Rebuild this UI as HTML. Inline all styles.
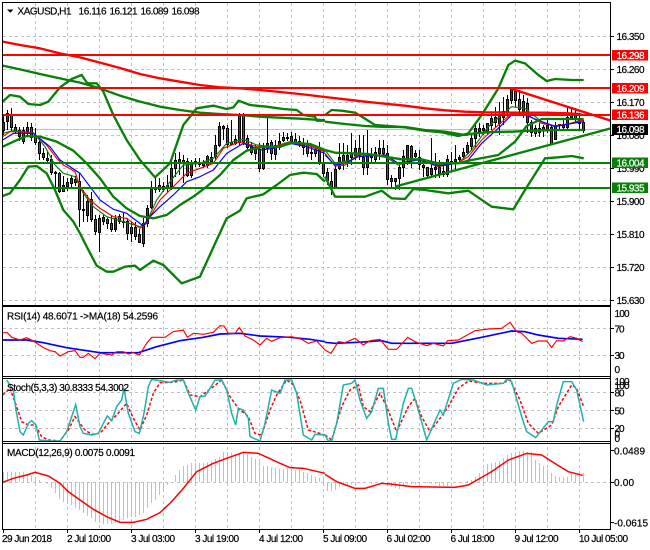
<!DOCTYPE html>
<html><head><meta charset="utf-8"><title>XAGUSD,H1</title>
<style>
html,body{margin:0;padding:0;background:#fff;width:650px;height:550px;overflow:hidden}
svg{display:block}
text{font-family:"Liberation Sans",sans-serif;font-size:10px;fill:#000;stroke:#000;stroke-width:.2}
.w{fill:#fff;stroke:#fff}
.thin{fill:none;stroke-width:3.5;stroke-linejoin:round}
.bb{fill:none;stroke-width:7;stroke-linejoin:round;stroke:#088008}
</style></head><body>
<svg width="650" height="550" viewBox="0 0 650 550" xmlns="http://www.w3.org/2000/svg">
<rect width="650" height="550" fill="#fff"/>
<!-- grid -->
<g stroke="#c0c0c0" stroke-width="1" stroke-dasharray="3 3" fill="none" shape-rendering="crispEdges">
<path d="M35.5 3V529M67.5 3V529M99.5 3V529M131.5 3V529M163.5 3V529M195.5 3V529M227.5 3V529M259.5 3V529M291.5 3V529M323.5 3V529M355.5 3V529M387.5 3V529M419.5 3V529M451.5 3V529M483.5 3V529M515.5 3V529M547.5 3V529M579.5 3V529"/>
<path d="M3 36.5H610M3 69.5H610M3 102.5H610M3 135.5H610M3 168.5H610M3 201.5H610M3 234.5H610M3 267.5H610M3 300.5H610M3 328.5H610M3 355.5H610M3 392.5H610M3 410.5H610M3 428.5H610M3 482.5H610"/>
</g>
<path d="M3 129.5H610" stroke="#c0c0c0" shape-rendering="crispEdges"/>
<!-- MACD histogram -->
<path stroke="#c0c0c0" stroke-width="1" shape-rendering="crispEdges" fill="none" d="M3.5 482V472M7.5 482V472M11.5 482V472M15.5 482V472M19.5 482V472M23.5 482V472M27.5 482V474M31.5 482V476M35.5 482V477M39.5 482V480M47.5 482V484M51.5 482V488M55.5 482V493M59.5 482V499M63.5 482V502M67.5 482V503M71.5 482V505M75.5 482V508M79.5 482V510M83.5 482V513M87.5 482V516M91.5 482V518M95.5 482V522M99.5 482V523M103.5 482V524M107.5 482V524M111.5 482V524M115.5 482V523M119.5 482V522M123.5 482V520M127.5 482V518M131.5 482V517M135.5 482V517M139.5 482V515M143.5 482V513M147.5 482V508M151.5 482V503M155.5 482V500M159.5 482V495M163.5 482V490M167.5 482V485M175.5 482V475M179.5 482V470M183.5 482V466M187.5 482V465M191.5 482V463M195.5 482V463M199.5 482V463M203.5 482V463M207.5 482V462M211.5 482V461M215.5 482V459M219.5 482V457M223.5 482V452M227.5 482V452M231.5 482V453M235.5 482V454M239.5 482V453M243.5 482V453M247.5 482V454M251.5 482V457M255.5 482V459M259.5 482V461M263.5 482V466M267.5 482V466M271.5 482V468M275.5 482V468M279.5 482V469M283.5 482V469M287.5 482V468M291.5 482V469M295.5 482V470M299.5 482V470M303.5 482V472M307.5 482V473M311.5 482V475M315.5 482V477M319.5 482V478M323.5 482V478M327.5 482V491M331.5 482V491M335.5 482V490M339.5 482V487M343.5 482V485M347.5 482V485M351.5 482V484M355.5 482V484M359.5 482V483M371.5 482V484M383.5 482V484M391.5 482V487M395.5 482V488M399.5 482V489M403.5 482V486M407.5 482V484M411.5 482V484M415.5 482V484M419.5 482V484M427.5 482V483M431.5 482V484M435.5 482V484M439.5 482V486M443.5 482V486M447.5 482V486M467.5 482V481M471.5 482V480M475.5 482V477M479.5 482V473M483.5 482V469M487.5 482V464M491.5 482V463M495.5 482V462M499.5 482V461M503.5 482V458M507.5 482V455M511.5 482V453M515.5 482V452M519.5 482V451M523.5 482V451M527.5 482V452M531.5 482V452M535.5 482V460M539.5 482V463M543.5 482V466M547.5 482V469M551.5 482V473M555.5 482V476M559.5 482V477M563.5 482V477M567.5 482V477M571.5 482V474M575.5 482V473M579.5 482V472M583.5 482V473"/>
<!-- wicks -->
<path stroke="#000" stroke-width="1" fill="none" shape-rendering="crispEdges" d="M3.5 115V135M7.5 110V130M11.5 108V132M15.5 124V134M19.5 127V141M23.5 127V144M27.5 122V135M31.5 123V141M35.5 128V145M39.5 138V160M43.5 148V160M47.5 152V163M51.5 155V175M55.5 171V188M59.5 172V193M63.5 176V192M67.5 178V191M71.5 175V188M75.5 176V186M79.5 173V227M83.5 190V222M87.5 195V222M91.5 192V222M95.5 215V235M99.5 215V252M103.5 215V225M107.5 217V229M111.5 215V232M115.5 215V232M119.5 214V224M123.5 213V228M127.5 218V240M131.5 222V242M135.5 222V240M139.5 229V243M143.5 218V247M147.5 205V227M151.5 181V209M155.5 178V193M159.5 178V192M163.5 182V192M167.5 175V192M171.5 160V190M175.5 153V177M179.5 152V175M183.5 155V183M187.5 158V177M191.5 160V178M195.5 158V167M199.5 158V167M203.5 160V168M207.5 155V168M211.5 152V163M215.5 135V160M219.5 122V147M223.5 125V140M227.5 125V148M231.5 120V145M235.5 135V145M239.5 113V145M243.5 113V145M247.5 135V150M251.5 142V155M255.5 145V160M259.5 143V172M263.5 143V170M267.5 115V153M271.5 140V160M275.5 140V160M279.5 133V150M283.5 132V142M287.5 133V141M291.5 132V143M295.5 133V145M299.5 136V147M303.5 138V155M307.5 140V157M311.5 145V160M315.5 145V157M319.5 142V165M323.5 150V177M327.5 168V185M331.5 172V195M335.5 165V188M339.5 143V170M343.5 143V170M347.5 145V167M351.5 133V165M355.5 140V160M359.5 135V160M363.5 135V175M367.5 130V175M371.5 148V162M375.5 147V163M379.5 140V160M383.5 140V157M387.5 145V185M391.5 175V187M395.5 178V190M399.5 165V190M403.5 150V177M407.5 145V165M411.5 145V168M415.5 150V158M419.5 150V170M423.5 162V177M427.5 167V178M431.5 138V178M435.5 153V178M439.5 160V178M443.5 165V177M447.5 155V177M451.5 152V172M455.5 145V170M459.5 155V163M463.5 148V158M467.5 142V155M471.5 135V150M475.5 125V148M479.5 123V137M483.5 125V135M487.5 123V135M491.5 113V130M495.5 107V128M499.5 102V135M503.5 97V125M507.5 95V117M511.5 88V104M515.5 88V107M519.5 90V115M523.5 95V118M527.5 98V133M531.5 120V137M535.5 125V137M539.5 123V137M543.5 125V137M547.5 120V133M551.5 125V145M555.5 122V140M559.5 124V130M563.5 120V130M567.5 108V130M571.5 108V120M575.5 108V122M579.5 115V130M583.5 120V133"/>
<!-- green bodies -->
<path fill="#0a6a0a" stroke="#000" stroke-width="1" shape-rendering="crispEdges" d="M2.5 122.5h2v8h-2zM6.5 113.5h2v8h-2zM22.5 130.5h2v11h-2zM26.5 127.5h2v4h-2zM46.5 158.5h2v2h-2zM54.5 172.5h2v1h-2zM62.5 185.5h2v6h-2zM66.5 182.5h2v4h-2zM70.5 178.5h2v5h-2zM74.5 179.5h2v3h-2zM82.5 209.5h2v1h-2zM86.5 201.5h2v14h-2zM98.5 218.5h2v14h-2zM102.5 217.5h2v4h-2zM114.5 218.5h2v11h-2zM122.5 221.5h2v1h-2zM130.5 227.5h2v6h-2zM138.5 234.5h2v8h-2zM142.5 223.5h2v20h-2zM146.5 208.5h2v15h-2zM150.5 189.5h2v18h-2zM154.5 187.5h2v2h-2zM162.5 186.5h2v3h-2zM166.5 185.5h2v3h-2zM170.5 168.5h2v18h-2zM174.5 160.5h2v8h-2zM178.5 159.5h2v4h-2zM182.5 160.5h2v3h-2zM190.5 163.5h2v12h-2zM194.5 161.5h2v2h-2zM198.5 162.5h2v2h-2zM206.5 156.5h2v9h-2zM210.5 157.5h2v4h-2zM214.5 145.5h2v11h-2zM218.5 126.5h2v19h-2zM222.5 126.5h2v2h-2zM230.5 142.5h2v2h-2zM234.5 139.5h2v4h-2zM238.5 115.5h2v27h-2zM250.5 145.5h2v7h-2zM254.5 148.5h2v5h-2zM262.5 147.5h2v21h-2zM266.5 143.5h2v5h-2zM274.5 145.5h2v9h-2zM278.5 141.5h2v6h-2zM282.5 137.5h2v3h-2zM286.5 137.5h2v1h-2zM290.5 136.5h2v5h-2zM298.5 141.5h2v3h-2zM310.5 152.5h2v1h-2zM314.5 149.5h2v4h-2zM334.5 169.5h2v18h-2zM338.5 157.5h2v11h-2zM346.5 155.5h2v7h-2zM350.5 153.5h2v4h-2zM354.5 148.5h2v7h-2zM366.5 154.5h2v13h-2zM370.5 154.5h2v3h-2zM374.5 152.5h2v7h-2zM378.5 148.5h2v5h-2zM390.5 178.5h2v3h-2zM394.5 178.5h2v3h-2zM398.5 167.5h2v11h-2zM402.5 156.5h2v11h-2zM406.5 145.5h2v13h-2zM414.5 153.5h2v3h-2zM430.5 168.5h2v6h-2zM434.5 167.5h2v2h-2zM446.5 159.5h2v15h-2zM450.5 161.5h2v2h-2zM454.5 159.5h2v2h-2zM458.5 157.5h2v2h-2zM462.5 152.5h2v4h-2zM466.5 145.5h2v7h-2zM470.5 138.5h2v8h-2zM474.5 128.5h2v10h-2zM478.5 128.5h2v3h-2zM486.5 123.5h2v8h-2zM490.5 118.5h2v7h-2zM494.5 117.5h2v5h-2zM498.5 115.5h2v8h-2zM502.5 111.5h2v6h-2zM506.5 99.5h2v13h-2zM510.5 89.5h2v11h-2zM522.5 101.5h2v11h-2zM534.5 128.5h2v5h-2zM542.5 127.5h2v3h-2zM546.5 125.5h2v4h-2zM554.5 125.5h2v14h-2zM558.5 124.5h2v1h-2zM562.5 125.5h2v2h-2zM566.5 117.5h2v10h-2zM570.5 113.5h2v4h-2z"/>
<!-- red bodies -->
<path fill="#e81010" stroke="#000" stroke-width="1" shape-rendering="crispEdges" d="M10.5 114.5h2v13h-2zM14.5 127.5h2v4h-2zM18.5 130.5h2v6h-2zM30.5 127.5h2v10h-2zM34.5 135.5h2v7h-2zM38.5 142.5h2v11h-2zM42.5 153.5h2v4h-2zM50.5 159.5h2v13h-2zM58.5 173.5h2v18h-2zM78.5 181.5h2v28h-2zM90.5 199.5h2v20h-2zM94.5 219.5h2v12h-2zM106.5 219.5h2v4h-2zM110.5 223.5h2v6h-2zM118.5 216.5h2v5h-2zM126.5 221.5h2v12h-2zM134.5 227.5h2v9h-2zM158.5 185.5h2v4h-2zM186.5 161.5h2v14h-2zM202.5 163.5h2v2h-2zM226.5 128.5h2v16h-2zM242.5 115.5h2v27h-2zM246.5 138.5h2v9h-2zM258.5 149.5h2v19h-2zM270.5 142.5h2v11h-2zM294.5 139.5h2v4h-2zM302.5 143.5h2v4h-2zM306.5 143.5h2v10h-2zM318.5 149.5h2v13h-2zM322.5 162.5h2v11h-2zM326.5 172.5h2v8h-2zM330.5 181.5h2v6h-2zM342.5 155.5h2v8h-2zM358.5 148.5h2v7h-2zM362.5 157.5h2v10h-2zM382.5 148.5h2v5h-2zM386.5 153.5h2v26h-2zM410.5 146.5h2v13h-2zM418.5 157.5h2v7h-2zM422.5 165.5h2v2h-2zM426.5 167.5h2v8h-2zM438.5 167.5h2v6h-2zM442.5 171.5h2v3h-2zM482.5 128.5h2v2h-2zM514.5 91.5h2v9h-2zM518.5 99.5h2v10h-2zM526.5 103.5h2v19h-2zM530.5 122.5h2v10h-2zM538.5 128.5h2v4h-2zM550.5 127.5h2v17h-2zM574.5 114.5h2v5h-2zM578.5 118.5h2v5h-2zM582.5 122.5h2v8h-2z"/>
<!-- main lines left half -->
<g transform="scale(.33333)">
<polyline class="thin" stroke="#0a7d0a" points="8,400 40,392 100,398 135,440 165,495 190,520 225,530 250,580 280,620 320,650 370,665 420,680 440,665 470,600 510,545 550,495 600,490 640,475 680,430 730,418 770,435 820,440 870,425 920,433 975,450"/>
<polyline class="thin" stroke="#ff0000" points="8,410 30,395 60,395 100,400 140,435 170,475 190,495 225,515 240,560 270,600 300,625 340,650 380,655 420,685 440,670 450,650 480,600 520,560 560,520 600,505 640,490 670,445 720,425 770,440 820,440 870,428 920,435 975,455"/>
<polyline class="thin" stroke="#0000ff" points="8,420 40,400 100,400 150,440 180,480 240,520 300,600 340,628 380,640 430,678 450,650 480,620 520,585 560,545 600,530 640,510 680,460 730,430 780,450 820,445 870,430 920,440 975,460"/>
<polyline class="bb" points="8,197 60,208 120,222 180,235 240,248 300,265 360,287 420,305 480,320 540,330 600,338 660,342 720,345 780,350 840,353 900,356 975,361"/>
<polyline class="bb" points="8,440 40,425 80,408 120,410 170,425 220,452 260,490 300,535 340,590 380,625 420,648 460,655 500,645 540,615 580,590 620,560 660,525 700,480 740,452 790,440 840,440 880,428 930,432 975,450"/>
<polyline class="bb" points="8,305 30,285 60,290 85,312 120,315 145,305 180,262 215,237 245,225 262,250 290,250 310,275 340,345 380,420 420,480 465,532 510,490 550,375 590,325 640,317 680,327 700,322 716,302 750,315 800,320 850,327 890,330 910,345 945,350 950,362 975,362"/>
<polyline class="bb" points="8,588 30,580 60,540 85,500 110,498 140,520 165,570 190,630 220,665 240,700 260,740 290,797 320,815 340,815 375,800 405,797 420,810 460,782 490,795 545,850 600,830 650,720 680,655 720,632 740,595 790,583 830,555 870,525 910,518 950,522 975,545"/>
<polyline fill="none" stroke="#ff0000" stroke-width="7" stroke-linejoin="round" points="8,125 60,135 120,145 180,160 240,172 300,188 360,204 420,222 480,235 540,245 600,255 660,262 720,265 780,270 840,276 900,282 975,291"/>
</g>
<!-- main lines right half -->
<g transform="translate(325 0) scale(.33333)">
<polyline class="thin" stroke="#0a7d0a" points="0,450 30,490 80,480 100,460 180,470 220,495 280,475 340,495 400,490 440,450 490,380 530,345 560,320 600,325 650,365 690,378 730,372 776,358"/>
<polyline class="thin" stroke="#ff0000" points="0,460 30,498 60,495 100,465 180,465 220,490 280,478 340,500 400,488 430,470 470,420 520,375 560,340 600,340 650,370 690,378 730,372 776,360"/>
<polyline class="thin" stroke="#0000ff" points="0,465 30,495 60,490 100,470 180,465 220,490 280,480 340,498 400,490 430,480 470,430 520,385 560,345 600,345 650,365 690,380 730,372 776,365"/>
<polyline class="bb" points="0,365 60,372 120,378 180,381 240,381 300,390 360,395 420,405 450,400 500,396 560,395 620,392 700,390 776,390"/>
<polyline class="bb" points="0,450 30,458 80,460 130,462 180,470 230,478 290,478 340,490 400,490 440,480 520,465 570,425 605,378 650,357 776,357"/>
<polyline class="bb" points="0,345 20,330 50,332 90,338 110,350 150,375 240,382 300,392 350,397 400,408 430,400 470,345 520,265 550,195 570,182 600,190 640,225 665,243 690,237 740,240 776,240"/>
<polyline class="bb" points="0,530 15,560 30,590 120,590 170,572 200,595 240,597 265,567 300,570 370,580 430,572 500,620 565,628 600,570 660,475 700,472 740,468 776,475"/>
<polyline fill="none" stroke="#ff0000" stroke-width="7" stroke-linejoin="round" points="0,291 60,298 120,305 180,311 240,317 300,325 360,331 420,335 480,337 570,338 660,338 730,340 770,343"/>
<path d="M210 560L857 385" stroke="#088008" stroke-width="7" fill="none"/>
<path d="M555 265L857 362" stroke="#ff0000" stroke-width="7" fill="none"/>
</g>
<!-- levels -->
<g shape-rendering="crispEdges" stroke-width="2" fill="none">
<path d="M3 55H611M3 88H611M3 115H611" stroke="#ff0000"/>
<path d="M3 163H611M3 188H611" stroke="#088008"/>
</g>
<!-- RSI -->
<g transform="translate(0 300) scale(.33333)" fill="none" stroke-width="3.5">
<polyline stroke="#0000ff" stroke-width="5" points="8,120 80,120 130,128 200,143 260,152 300,158 415,158 470,140 540,122 610,112 660,102 720,100 780,108 870,112 930,118 975,125"/>
<polyline stroke="#ff0000" points="8,98 22,98 35,112 60,120 80,113 100,123 130,143 150,152 165,155 180,168 205,155 225,152 240,172 250,172 265,160 285,176 300,160 335,165 350,155 370,155 385,162 400,158 418,165 440,130 455,112 495,112 520,95 550,90 562,112 580,100 610,103 640,97 660,77 672,78 685,100 705,100 718,83 735,108 760,120 780,135 800,115 815,124 840,113 875,110 905,118 925,130 950,123 975,150"/>
<polyline stroke="#ff0000" stroke-width="4.5" stroke-dasharray="9 6" points="8,285 30,265 50,320 65,365 85,375 105,375 125,410 145,420 180,423 205,390 225,350 255,390 275,403 300,400 325,370 350,345 380,310 400,355 420,390 440,345 460,280 480,248 520,247 550,240 570,285 600,290 640,260 665,240 690,290 715,325 745,350 765,400 785,405 810,330 830,285 860,240 880,255 900,300 925,390 975,405"/>
<polyline stroke="#20b2aa" stroke-width="4.5" points="20,240 40,270 48,330 60,395 70,405 85,370 95,362 108,375 118,420 150,423 180,423 200,395 215,350 227,314 240,380 250,400 275,405 295,400 310,370 322,348 335,362 350,320 365,300 372,265 385,340 405,395 418,400 432,340 445,260 455,238 480,242 510,247 530,240 550,240 565,280 587,330 600,290 615,288 630,265 645,240 665,240 680,270 695,340 707,375 715,325 730,330 745,355 750,410 780,423 795,370 815,270 840,280 855,240 875,240 890,280 910,405 935,420 945,403 975,405"/>
<polyline stroke="#ff0000" stroke-width="4.5" points="8,547 40,535 80,525 105,517 145,528 180,550 205,575 240,600 280,628 320,650 360,667 400,667 440,658 480,638 515,605 550,565 590,515 640,490 680,475 730,457 775,460 840,490 870,503 910,505 975,520"/>
</g>
<g transform="translate(325 300) scale(.33333)" fill="none" stroke-width="3.5">
<polyline stroke="#0000ff" stroke-width="5" points="0,127 30,130 100,127 170,122 200,130 300,130 380,130 470,112 560,93 600,95 640,105 700,115 773,118"/>
<polyline stroke="#ff0000" points="0,150 18,160 40,125 60,128 90,115 115,135 135,122 165,118 190,148 215,148 248,112 270,125 305,137 325,130 355,138 368,122 400,120 450,92 490,87 530,85 555,67 575,95 590,100 620,130 640,123 665,123 680,142 695,122 715,123 735,110 755,115 773,125"/>
<polyline stroke="#ff0000" stroke-width="4.5" stroke-dasharray="9 6" points="0,405 20,420 50,320 75,270 100,255 115,320 135,335 165,280 185,320 215,395 250,320 270,295 290,350 315,395 345,355 370,320 400,265 430,243 480,250 530,250 555,240 585,300 610,370 640,400 680,375 700,320 740,255 755,265 776,320"/>
<polyline stroke="#20b2aa" stroke-width="4.5" points="0,405 10,423 20,423 35,370 55,255 80,250 90,240 105,300 125,355 140,335 160,265 175,265 190,370 200,418 212,418 235,310 250,265 260,265 280,330 305,420 345,330 355,345 385,250 410,238 445,240 485,255 535,250 545,238 560,245 590,350 605,395 632,413 670,365 685,365 695,315 715,245 740,245 755,270 776,365"/>
<polyline stroke="#ff0000" stroke-width="4.5" points="0,523 35,545 90,565 120,565 170,550 195,552 260,560 390,562 430,555 500,515 550,480 605,460 650,465 700,497 730,515 773,526"/>
</g>
<!-- panel frames -->
<g fill="none" stroke="#000" stroke-width="1" shape-rendering="crispEdges">
<path d="M2.5 2.5H610.5V529.5H2.5Z"/>
<path d="M2.5 305.5H610.5M2.5 306.5H610.5M2.5 376.5H610.5M2.5 378.5H610.5M2.5 441.5H610.5M2.5 443.5H610.5"/>
<path d="M611 36.5h3M611 69.5h3M611 102.5h3M611 135.5h3M611 168.5h3M611 201.5h3M611 234.5h3M611 267.5h3M611 300.5h3M611 328.5h3M611 355.5h3M611 392.5h3M611 410.5h3M611 428.5h3M611 450.5h3M611 482.5h3M611 522.5h3"/>
<path d="M3.5 530v3M67.5 530v3M131.5 530v3M195.5 530v3M259.5 530v3M323.5 530v3M387.5 530v3M451.5 530v3M515.5 530v3M579.5 530v3"/>
</g>
<!-- title -->
<path d="M7 9.5h6.5l-3.2 3.2z" fill="#000"/>
<text x="17.5" y="14.5" textLength="54" lengthAdjust="spacing">XAGUSD,H1</text>
<text x="78.5" y="14.5" textLength="28" lengthAdjust="spacing">16.116</text>
<text x="109.5" y="14.5" textLength="28" lengthAdjust="spacing">16.121</text>
<text x="140.5" y="14.5" textLength="28" lengthAdjust="spacing">16.089</text>
<text x="171.5" y="14.5" textLength="28" lengthAdjust="spacing">16.098</text>
<text x="7" y="319.5" textLength="151" lengthAdjust="spacing">RSI(14) 48.6071  -&gt;MA(18) 54.2596</text>
<text x="7" y="391" textLength="122" lengthAdjust="spacing">Stoch(5,3,3) 30.8333 54.3002</text>
<text x="7" y="456" textLength="128" lengthAdjust="spacing">MACD(12,26,9) 0.0075 0.0091</text>
<!-- price axis -->
<g>
<text x="616.5" y="40" textLength="28">16.350</text>
<text x="616.5" y="73" textLength="28">16.260</text>
<text x="616.5" y="106" textLength="28">16.170</text>
<text x="616.5" y="139" textLength="28">16.080</text>
<text x="616.5" y="172" textLength="28">15.990</text>
<text x="616.5" y="205" textLength="28">15.900</text>
<text x="616.5" y="238" textLength="28">15.810</text>
<text x="616.5" y="271" textLength="28">15.720</text>
<text x="616.5" y="304" textLength="28">15.630</text>
</g>
<rect x="612" y="50" width="36" height="10.5" fill="#ff0000"/>
<rect x="612" y="83" width="36" height="10.5" fill="#ff0000"/>
<rect x="612" y="109.5" width="36" height="10.5" fill="#ff0000"/>
<rect x="612" y="124" width="36" height="11" fill="#000"/>
<rect x="612" y="157.5" width="36" height="10.5" fill="#088008"/>
<rect x="612" y="182.5" width="36" height="10.5" fill="#088008"/>
<text class="w" x="616.5" y="59" textLength="28">16.298</text>
<text class="w" x="616.5" y="92" textLength="28">16.209</text>
<text class="w" x="616.5" y="118.5" textLength="28">16.136</text>
<text class="w" x="616.5" y="133" textLength="28">16.098</text>
<text class="w" x="616.5" y="166.5" textLength="28">16.004</text>
<text class="w" x="616.5" y="191.5" textLength="28">15.935</text>
<!-- sub-axis -->
<text x="614.5" y="317" textLength="15">100</text>
<text x="614.5" y="332.5" textLength="10">70</text>
<text x="614.5" y="359" textLength="10">30</text>
<text x="614.5" y="373" textLength="5">0</text>
<text x="614.5" y="385" textLength="15">100</text>
<text x="614.5" y="389" textLength="15">100</text>
<text x="614.5" y="396.5" textLength="10">80</text>
<text x="614.5" y="414.5" textLength="10">50</text>
<text x="614.5" y="432" textLength="10">20</text>
<text x="614.5" y="437.5" textLength="5">0</text>
<text x="614.5" y="442" textLength="5">0</text>
<text x="614" y="454.5" textLength="31">0.0489</text>
<text x="614" y="486" textLength="20">0.00</text>
<text x="614" y="526.5" textLength="34">-0.0615</text>
<!-- time axis -->
<text x="2" y="542" textLength="50">29 Jun 2018</text>
<text x="67" y="542" textLength="44">2 Jul 10:00</text>
<text x="131" y="542" textLength="44">3 Jul 03:00</text>
<text x="195" y="542" textLength="44">3 Jul 19:00</text>
<text x="259" y="542" textLength="44">4 Jul 12:00</text>
<text x="323" y="542" textLength="44">5 Jul 09:00</text>
<text x="386.5" y="542" textLength="44">6 Jul 02:00</text>
<text x="450.5" y="542" textLength="44">6 Jul 18:00</text>
<text x="514.5" y="542" textLength="44">9 Jul 12:00</text>
<text x="579" y="542" textLength="49">10 Jul 05:00</text>
</svg>
</body></html>
